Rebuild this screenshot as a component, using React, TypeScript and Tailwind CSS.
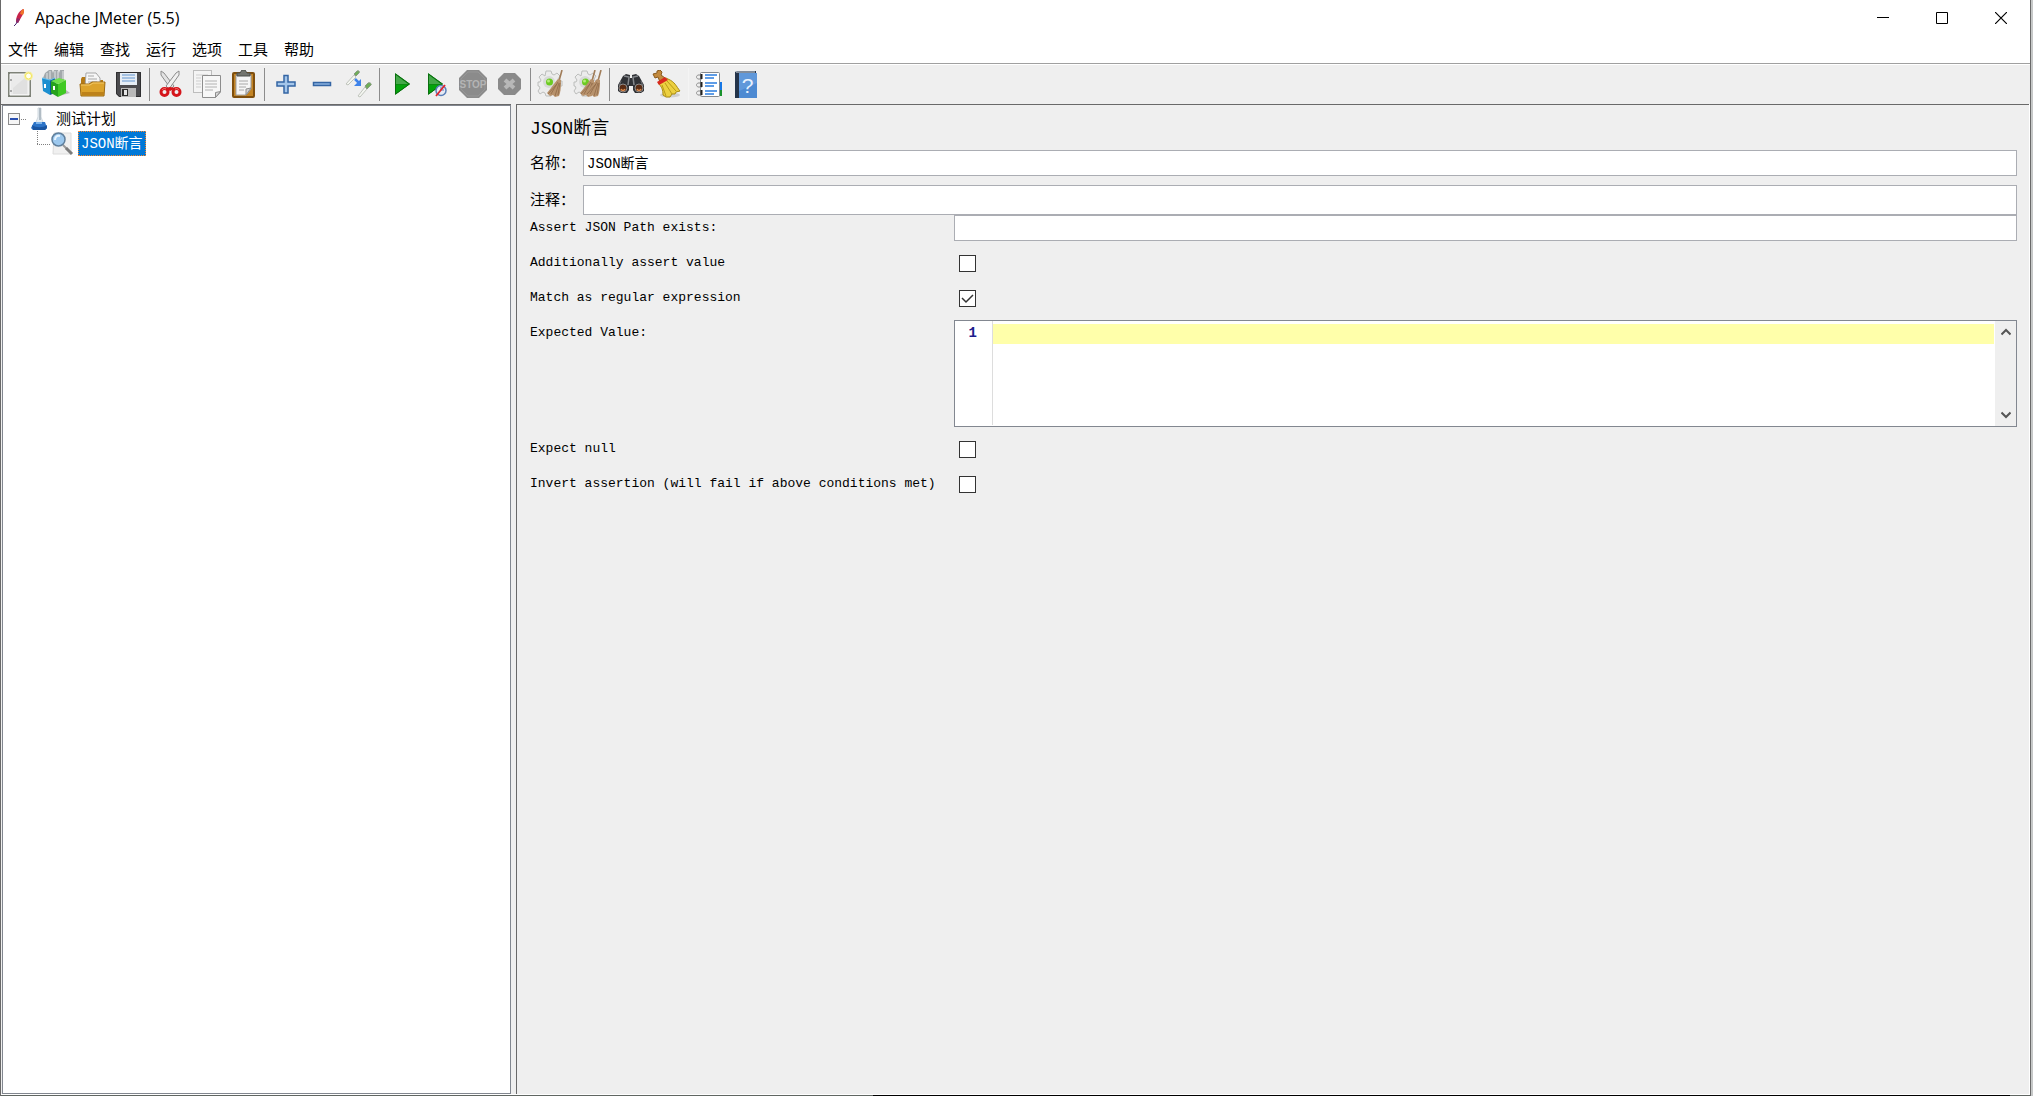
import { useState } from 'react';
import type { ReactNode } from 'react';

type Tool = { label: string; icon: ReactNode };

const cjk = "font-['Liberation_Sans','Noto_Sans_CJK_SC',sans-serif]";
const mono = "font-['Liberation_Mono','Noto_Sans_CJK_SC',monospace]";

function Icon({ children }: { children: ReactNode }) {
  return (
    <svg width="30" height="30" viewBox="0 0 30 30" fill="none" aria-hidden="true">
      {children}
    </svg>
  );
}

function Gear() {
  return (
    <>
      <path
        d="M9 1h5l1 3 2 1 3-2 3 3-2 3 1 2h3v5h-3l-1 2 2 3-3 3-3-2-2 1-1 3H9l-1-3-2-1-3 2-2-3 2-3-1-2H1v-4h2l1-2-2-3 3-3 3 2z"
        fill="#ececec"
        stroke="#bcbebc"
      />
      <circle cx="12" cy="12" r="6" fill="#d8dad8" />
      <circle cx="12.5" cy="12" r="3.5" fill="#6ccb22" />
      <circle cx="11.5" cy="11" r="1.5" fill="#b4ec78" />
    </>
  );
}

function Besom() {
  return (
    <>
      <path d="M25 0 22 11" stroke="#a07c58" strokeWidth="1.6" />
      <path d="M21 9c-3 3-5 7-11 14l3 3 3-1 2 2 4-1 1-3c1-5 1-9 1-13z" fill="#b8926c" />
      <path d="m21 12-7 12m8-11-4 13m5-13-2 12m-1-11-9 10" stroke="#8f6a48" strokeWidth=".8" />
    </>
  );
}

const groups: Tool[][] = [
  [
    {
      label: '新建',
      icon: (
        <Icon>
          <rect x="4" y="3" width="21" height="23" fill="#ebebeb" stroke="#7e8278" strokeWidth="2" />
          <path d="M5 4h19v21H5z" stroke="#fafafa" />
          <path d="M8 18 22 6v18H8z" fill="#e0e0e0" />
          <path d="M6 9v2m0 9v2" stroke="#9a9a9a" strokeWidth="1.6" />
          <circle cx="23.5" cy="6" r="4.5" fill="#f6f0a0" />
          <circle cx="23.5" cy="6" r="3" fill="#fffff0" stroke="#f2e358" />
        </Icon>
      ),
    },
    {
      label: '模板',
      icon: (
        <Icon>
          <path d="M18 26l11-3-4-3-7 2z" fill="#b9b9b9" />
          <path d="M2 8 4 3l4-3h3l1 3 1-3h4l1 3 1-3h4v12L12 14 2 11z" fill="#a3a9ac" />
          <path d="M6 3v6m3-8v8m5-8v8m3-8v8m5-8v8" stroke="#e3e6e7" />
          <path d="M1 8l8 2v15l-7-4z" fill="#1b8fd0" />
          <path d="M9 10l5-2v15l-5 2z" fill="#0c5d96" />
          <path d="M1 8l8 2 5-2" stroke="#6cc0ee" />
          <path d="M4 14v4" stroke="#fff" strokeWidth="2" />
          <path d="M10 11l7 3v13l-7-4z" fill="#27a21c" />
          <path d="M17 14l8-4v13l-8 4z" fill="#3fc922" />
          <path d="M10 11l8-3 7 2-8 4z" fill="#6fe04a" />
          <path d="M13 16v4" stroke="#fff" strokeWidth="2" />
        </Icon>
      ),
    },
    {
      label: '打开',
      icon: (
        <Icon>
          <path d="M4 26V9l1-2h6l2 3h13v16z" fill="#b57a16" />
          <path d="M9 3h10l4 5v9H8z" fill="#f6f6f6" stroke="#a5a5a5" />
          <path d="M11 6h6m-6 3h9m-9 3h9" stroke="#a8a8a8" />
          <path d="M3 14h9l3-2h13l-1 14H4z" fill="#dca32c" stroke="#9d6a12" />
          <path d="M4 15h9l3-2h11" stroke="#f3cb6a" />
          <path d="M5 22h22v3H5z" fill="#bd821b" />
        </Icon>
      ),
    },
    {
      label: '保存',
      icon: (
        <Icon>
          <path d="M3 2h25v25H6l-3-3z" fill="#4b4b4e" />
          <path d="M3.5 2.5h24v24h-21l-3-3z" stroke="#2f2f31" />
          <path d="M7 3h17v12H7z" fill="#e6edf5" />
          <path d="M9 5h13M9 8h13m-13 3h13" stroke="#8fb3dc" strokeWidth="1.5" />
          <path d="M8 18h15v9H8z" fill="#b9b9b9" />
          <path d="M9 19h6v7H9z" fill="#2c2c2c" />
          <path d="M11 20h3v5h-3z" fill="#e5e5e5" />
        </Icon>
      ),
    },
  ],
  [
    {
      label: '剪切',
      icon: (
        <Icon>
          <path d="M5 1l3 2 10 13-3 3L5 5z" fill="#e2e2e2" stroke="#8c8c8c" />
          <path d="M23 1l-3 2-10 13 3 3L23 5z" fill="#f0f0f0" stroke="#8c8c8c" />
          <ellipse cx="8.500" cy="22" rx="3.500" ry="3.500" stroke="#d5151b" strokeWidth="3" />
          <ellipse cx="20.500" cy="22" rx="3.500" ry="3.500" stroke="#d5151b" strokeWidth="3" />
          <path d="M9 18l5-1 6 1-6 3z" fill="#d5151b" />
          <path d="M6 20c1-1 2-2 4-1m9 0c2-1 3 0 4 1" stroke="#f47474" />
        </Icon>
      ),
    },
    {
      label: '复制',
      icon: (
        <Icon>
          <rect x="1.5" y=".5" width="18" height="22" fill="#f4f4f4" stroke="#bdbdbd" />
          <path d="M4 5h12M4 8h5m-5 3h5m-5 3h5m-5 3h5" stroke="#cfcfcf" />
          <path d="M10.5 5.500h18V22l-5 5.500h-13z" fill="#f7f7f7" stroke="#8d8d8d" />
          <path d="M13 11h12m-12 3h12m-12 3h12m-12 3h8" stroke="#b2b2b2" />
          <path d="M28.500 21.500l-5 6v-5z" fill="#d9d9d9" stroke="#8d8d8d" />
        </Icon>
      ),
    },
    {
      label: '粘贴',
      icon: (
        <Icon>
          <rect x="5" y="3" width="21" height="24" rx="1" fill="#c38424" stroke="#7f4f0e" strokeWidth="2" />
          <path d="M8 5h15v14l-5 6H8z" fill="#f5f5f5" stroke="#a0a0a0" />
          <path d="M11 11h9m-9 3h9m-9 3h7m-7 3h5" stroke="#a8a8a8" />
          <path d="M23 18l-5 7v-6z" fill="#d3d3d3" stroke="#8d8d8d" />
          <path d="M9 6V3h3l2-3h3l2 3h3v3z" fill="#73756f" stroke="#4d4f4a" />
        </Icon>
      ),
    },
  ],
  [
    {
      label: '展开',
      icon: (
        <Icon>
          <path d="M13 5.500h4V12h7v4h-7v7h-4v-7H6v-4h7z" fill="#a4c6ea" stroke="#3465a4" strokeWidth="1.500" />
        </Icon>
      ),
    },
    {
      label: '折叠',
      icon: (
        <Icon>
          <path d="M6.500 12.500h17v3h-17z" fill="#89b1df" stroke="#3465a4" strokeWidth="1.500" />
        </Icon>
      ),
    },
    {
      label: '切换',
      icon: (
        <Icon>
          <path d="M3 14l8-9 2 2-8 8z" fill="#f4f6f1" stroke="#c0c4bc" />
          <path d="M11 4l3-3c2-1 3 1 2 2l-3 3z" fill="#6fae58" stroke="#8a9a84" />
          <path d="M15 26l7-9 2 2-7 8z" fill="#f4f6f1" stroke="#c0c4bc" />
          <path d="M22 16l3-3c2-1 4 1 3 2l-4 4z" fill="#6fae58" stroke="#8a9a84" />
          <path d="M12 9l4 4" stroke="#3f83ea" strokeWidth="2.500" />
          <path d="M18 9v7h-7z" fill="#3f83ea" />
        </Icon>
      ),
    },
  ],
  [
    {
      label: '启动',
      icon: (
        <Icon>
          <path d="M9 3l15 11L9 25z" fill="#0c8a12" />
          <path d="M10 5l12 9H10z" fill="#45a84a" />
          <path d="M10 15h12l-12 9z" fill="#04a40c" />
          <path d="M9.500 4l14 10-14 10z" stroke="#0b6e10" />
        </Icon>
      ),
    },
    {
      label: '不停顿开始',
      icon: (
        <Icon>
          <path d="M6 3l15 11L6 25z" fill="#0c8a12" />
          <path d="M7 5l12 9H7z" fill="#45a84a" />
          <path d="M7 15h12L7 24z" fill="#04a40c" />
          <path d="M6.500 4l14 10-14 10z" stroke="#0b6e10" />
          <circle cx="19" cy="20.500" r="5" fill="#e6eaf4" stroke="#5a7fb8" strokeWidth="1.500" />
          <path d="M19 20v-3m0 3h3" stroke="#5a7fb8" />
          <path d="M14 26l9-11" stroke="#e0242c" strokeWidth="1.800" />
        </Icon>
      ),
    },
    {
      label: '停止',
      icon: (
        <Icon>
          <path d="M9 0h12l8 8v12l-8 8H9l-8-8V8z" fill="#8b8b8b" />
          <path d="M10 2h10l7 7v10l-7 7H10l-7-7V9z" stroke="#969696" />
          <text x="15" y="18" fill="#b4b4b4" fontSize="10" fontWeight="700" fontFamily="Liberation Sans" textAnchor="middle">
            STOP
          </text>
        </Icon>
      ),
    },
    {
      label: '关闭',
      icon: (
        <Icon>
          <path d="M10 3h11l6 6v10l-6 6H10l-6-6V9z" fill="#8a8a8a" />
          <path d="M11 10l9 8m0-8l-9 8" stroke="#b8b8b8" strokeWidth="4" />
        </Icon>
      ),
    },
  ],
  [
    {
      label: '清除',
      icon: (
        <Icon>
          <Gear />
          <Besom />
        </Icon>
      ),
    },
    {
      label: '清除全部',
      icon: (
        <Icon>
          <Gear />
          <g transform="translate(-3 0)">
            <Besom />
          </g>
          <g transform="translate(3 0)">
            <Besom />
          </g>
        </Icon>
      ),
    },
  ],
  [
    {
      label: '查找',
      icon: (
        <Icon>
          <path d="M7 6l3-2 4 1v3h2V5l4-1 3 2 5 9v6l-3 2h-6l-2-3v-4h-4v4l-2 3H5l-3-2v-6z" fill="#303236" />
          <path d="M8 6l5 1-1 8m10-9l-5 1 1 8" stroke="#85888c" strokeWidth="1.500" />
          <path d="M5 11l-2 5m22-5l2 5" stroke="#6d7074" />
          <circle cx="7" cy="18" r="4" fill="#5a2c14" stroke="#8c8c8c" />
          <circle cx="23" cy="18" r="4" fill="#5a2c14" stroke="#8c8c8c" />
          <path d="M5 19c1 2 3 2 4 0m12 0c1 2 3 2 4 0" stroke="#d98a4e" strokeWidth="1.500" />
        </Icon>
      ),
    },
    {
      label: '重置搜索',
      icon: (
        <Icon>
          <ellipse cx="18" cy="25" rx="10" ry="2.500" fill="#cfcfcf" />
          <path d="M1 4l4-1V1l3-1 2 2-1 3 4 3-5 4-2-5-3 1z" fill="#c28a3e" stroke="#8a5a1c" />
          <path d="M6 13l8-5 2 1c7 3 8 7 12 12l-4 1-1 2h-3l-2 3h-4l-3-2c0-5-1-8-5-12z" fill="#ecd040" stroke="#a88a10" />
          <path d="M10 15l4 11m-1-13l7 11m-5-13l9 10" stroke="#b89a18" />
          <path d="M5 12l8-5 3 3-9 5z" fill="#d9281e" />
        </Icon>
      ),
    },
  ],
  [
    {
      label: '函数助手对话框',
      icon: (
        <Icon>
          <path d="M23 12h4v8h-4z" fill="#1577e6" />
          <path d="M23 20h4v6h-4z" fill="#18922c" />
          <rect x="5.500" y="2.500" width="19" height="24" rx="1" fill="#fff" stroke="#858a90" />
          <path d="M10 5h12m-12 3h9m-9 5h12m-12 3h9m-9 5h12m-12 3h9" stroke="#2b7de0" strokeWidth="1.300" />
          <path d="M7 5H3c-2 1-2 3 0 4h4M7 13H3c-2 1-2 3 0 4h4m0 4H3c-2 1-2 3 0 4h4" stroke="#8d8d8d" />
          <path d="M6.500 4v5m0 3v5m0 3v5" stroke="#222" strokeWidth="2" />
        </Icon>
      ),
    },
    {
      label: '帮助',
      icon: (
        <Icon>
          <path d="M4 2l2-1h19v25l-1 2H4z" fill="#24344a" />
          <path d="M8 3h18v25H8z" fill="#4d8ad2" />
          <path d="M8 3h18v10L8 21z" fill="#6098da" />
          <path d="M5 2h19" stroke="#dfe5ec" />
          <text x="16.500" y="23" fill="#e8f2ff" fontSize="21" fontFamily="Liberation Sans" textAnchor="middle">
            ?
          </text>
        </Icon>
      ),
    },
  ],
];

const menus = ['文件', '编辑', '查找', '运行', '选项', '工具', '帮助'];

function TitleBar() {
  return (
    <header className="flex h-9 items-center justify-between bg-white">
      <div className="flex items-center gap-2 pl-2">
        <svg width="18" height="22" viewBox="0 0 18 22" fill="none" aria-hidden="true">
          <path d="M14 2c2 1 1 4-1 7l-4 7-2-1c0-5 2-10 7-13z" fill="#c8234a" />
          <path d="M12 4c1-1 2-2 3-2 0 2 0 4-1 6l-3-1z" fill="#f0762a" />
          <path d="M9 16l2-4-3-1-1 4z" fill="#8a2a6c" />
          <path d="M8 15l-1 2-2 2" stroke="#4a2a72" />
        </svg>
        <h1 className="font-['Open_Sans',sans-serif] text-[16px] leading-5 text-black">Apache JMeter (5.5)</h1>
      </div>
      <div className="flex">
        <button aria-label="最小化" className="flex h-9 w-[59px] items-center justify-center">
          <svg width="12" height="12" viewBox="0 0 12 12">
            <path d="M0 5.500h12" stroke="#000" />
          </svg>
        </button>
        <button aria-label="最大化" className="flex h-9 w-[59px] items-center justify-center">
          <svg width="12" height="12" viewBox="0 0 12 12">
            <path d="M.5.5h11v11H.5z" fill="none" stroke="#000" />
          </svg>
        </button>
        <button aria-label="关闭窗口" className="flex h-9 w-[59px] items-center justify-center">
          <svg width="12" height="12" viewBox="0 0 12 12">
            <path d="M0 0l12 12M12 0L0 12" stroke="#000" strokeWidth="1.200" />
          </svg>
        </button>
      </div>
    </header>
  );
}

function Toolbar() {
  return (
    <div role="toolbar" className="flex h-10 items-center border-t border-white bg-[#efefef] pl-px">
      {groups.map((group, i) => (
        <div key={i} className="flex items-center">
          {i > 0 && (
            <div className="flex w-[7px] justify-center">
              <div className={`h-[33px] w-px ${i < 6 ? 'bg-[#8c8c8c]' : 'bg-[#f4f4f4]'}`} />
            </div>
          )}
          {group.map((tool) => (
            <button key={tool.label} title={tool.label} aria-label={tool.label} className="flex w-9 justify-center">
              {tool.icon}
            </button>
          ))}
        </div>
      ))}
    </div>
  );
}

function TestTree() {
  return (
    <nav className="flex w-[510px] shrink-0 border-t border-t-[#696969] pl-px">
      <ul className="w-full border border-[#828790] bg-white text-black">
        <li>
          <div className="flex h-[25px] items-center pl-[5px]">
            <button aria-label="折叠测试计划">
              <svg width="18" height="12" viewBox="0 0 18 12" className="block">
                <rect x=".5" y=".5" width="11" height="11" fill="#f6f6f6" stroke="#8c8c8c" />
                <path d="M2 6h8" stroke="#2b50b0" strokeWidth="2" />
                <path d="M13 6.500h5" stroke="#808080" strokeDasharray="1 1" />
              </svg>
            </button>
            <svg width="24" height="25" viewBox="0 0 24 25" aria-hidden="true">
              <path d="M12 2h3v9l4 10H8l4-10z" fill="#e4ecf2" stroke="#d0d8de" />
              <path d="M14 2v12" stroke="#a3afb9" strokeWidth="1.500" />
              <path d="M8 16h11l2 6-2 2H7l-2-2z" fill="#2c74c8" />
              <path d="M6 19c4 3 11 3 15 0v3l-2 2H7z" fill="#1b56a2" />
              <path d="M10 17h6" stroke="#7db4ea" strokeWidth="2" />
            </svg>
            <span className={`pl-1.5 text-[15px] leading-5 ${cjk}`}>测试计划</span>
          </div>
          <ul>
            <li className="flex h-[25px] items-center pl-[34px]">
              <svg width="13" height="25" viewBox="0 0 13 25" fill="none" aria-hidden="true">
                <path d="M.5 0v13M0 13.500h13" stroke="#808080" strokeDasharray="1 1" />
              </svg>
              <svg width="24" height="25" viewBox="0 0 24 25" fill="none" aria-hidden="true">
                <path d="M4 2h17v21H3z" fill="#f0f0f0" stroke="#dcdcdc" />
                <path d="M13 14l4 4" stroke="#9a9a9a" strokeWidth="2" />
                <path d="M16 17l6 6" stroke="#7c7c7c" strokeWidth="3" />
                <circle cx="8.500" cy="8.500" r="6.500" fill="#9cc8ee" stroke="#5f7f9c" strokeWidth="1.500" />
                <path d="M5 9c0-3 2-5 5-4" stroke="#e8f5ff" strokeWidth="2" />
              </svg>
              <button
                className={`ml-1 h-[25px] border border-dotted border-[#ff8728] bg-[#0078d7] px-[2px] text-[14px] leading-5 text-white ${mono}`}
              >
                JSON断言
              </button>
            </li>
          </ul>
        </li>
      </ul>
    </nav>
  );
}

function CheckRow({ id, label, initial = false }: { id: string; label: string; initial?: boolean }) {
  const [checked, setChecked] = useState(initial);

  return (
    <>
      <label htmlFor={id} className="h-[26px] leading-[26px]">
        {label}
      </label>
      <div className="flex h-[26px] items-center pl-[5px]">
        <span className="relative flex">
          <input
            id={id}
            type="checkbox"
            checked={checked}
            onChange={(e) => setChecked(e.target.checked)}
            className="h-[17px] w-[17px] appearance-none border border-[#333333] bg-white"
          />
          {checked && (
            <svg width="17" height="17" viewBox="0 0 17 17" className="pointer-events-none absolute inset-0">
              <path d="M3 8l4 4 7-7" fill="none" stroke="#333" strokeWidth="1.500" />
            </svg>
          )}
        </span>
      </div>
    </>
  );
}

function AssertionPanel() {
  const [name, setName] = useState('JSON断言');
  const [comment, setComment] = useState('');
  const [path, setPath] = useState('');
  const [expected, setExpected] = useState('');

  return (
    <main
      className={`min-w-0 flex-1 border-t border-l border-[#696969] bg-[#efefef] pt-3 pr-3 pl-[13px] text-[13px] text-black ${mono}`}
    >
      <h2 className="h-[33px] text-[18px] leading-6">JSON断言</h2>
      <div className="grid grid-cols-[53px_1fr] gap-y-[9px]">
        <label htmlFor="name" className={`text-[15px] leading-[26px] whitespace-nowrap ${cjk}`}>
          名称：
        </label>
        <input
          id="name"
          value={name}
          onChange={(e) => setName(e.target.value)}
          className="h-[26px] min-w-0 border border-[#abadb3] bg-white px-[3px] pb-[2px] text-[14px]"
        />
        <label htmlFor="comment" className={`text-[15px] leading-[30px] whitespace-nowrap ${cjk}`}>
          注释：
        </label>
        <input
          id="comment"
          value={comment}
          onChange={(e) => setComment(e.target.value)}
          className="h-[30px] min-w-0 border border-[#abadb3] bg-white px-[3px] pb-[2px] text-[14px]"
        />
      </div>

      <div className="grid grid-cols-[424px_1fr] gap-y-[9px]">
        <label htmlFor="path" className="leading-[26px]">
          Assert JSON Path exists:
        </label>
        <input
          id="path"
          value={path}
          onChange={(e) => setPath(e.target.value)}
          className="h-[26px] min-w-0 border border-[#abadb3] bg-white px-[3px] pb-[2px] text-[14px]"
        />

        <CheckRow id="assert-value" label="Additionally assert value" />
        <CheckRow id="regex" label="Match as regular expression" initial />

        <label htmlFor="expected" className="leading-[26px]">
          Expected Value:
        </label>
        <div className="flex h-[107px] border border-[#828790] bg-white">
          <div className="mb-px w-[38px] border-r border-[#dddddd] pt-[3px] pr-[15px] text-right text-[14px] leading-[18px] font-bold text-[#1c1c8c]">
            1
          </div>
          <textarea
            id="expected"
            value={expected}
            onChange={(e) => setExpected(e.target.value)}
            className="mt-[3px] mr-px min-w-0 flex-1 resize-none overflow-hidden bg-[linear-gradient(#ffffaa,#ffffaa)] bg-[length:100%_20px] bg-no-repeat text-[14px] leading-5 outline-none"
          />
          <div className="flex w-[21px] flex-col justify-between bg-[#efefef]">
            <button aria-label="向上滚动" className="flex h-[22px] items-center justify-center">
              <svg width="10" height="8" viewBox="0 0 10 8" fill="none">
                <path d="M.5 6.500L5 2l4.500 4.500" stroke="#555" strokeWidth="2" />
              </svg>
            </button>
            <button aria-label="向下滚动" className="flex h-[22px] items-center justify-center">
              <svg width="10" height="8" viewBox="0 0 10 8" fill="none">
                <path d="M.5 1.500L5 6l4.500-4.500" stroke="#555" strokeWidth="2" />
              </svg>
            </button>
          </div>
        </div>

        <CheckRow id="expect-null" label="Expect null" />
        <CheckRow id="invert" label="Invert assertion (will fail if above conditions met)" />
      </div>
    </main>
  );
}

export default function App() {
  return (
    <div className="flex min-h-screen bg-[#c6c8c8] pr-[2px]">
      <div className="flex min-w-0 flex-1 flex-col border-x border-[#696969] bg-white">
        <TitleBar />
        <nav className={`flex h-7 gap-4 border-b border-[#a0a0a0] bg-white pl-[7px] text-[15px] leading-[26px] text-black ${cjk}`}>
          {menus.map((menu) => (
            <button key={menu}>{menu}</button>
          ))}
        </nav>
        <Toolbar />
        <div className="flex flex-1 bg-[#efefef]">
          <TestTree />
          <div className="w-[5px] shrink-0 cursor-col-resize" />
          <AssertionPanel />
          <div className="w-px bg-white" />
        </div>
        <div className="h-px bg-white" />
        <div className="flex h-px bg-[#606662]">
          <div className="w-[43%]" />
          <div className="flex-1 bg-black" />
          <div className="w-5" />
        </div>
      </div>
    </div>
  );
}
